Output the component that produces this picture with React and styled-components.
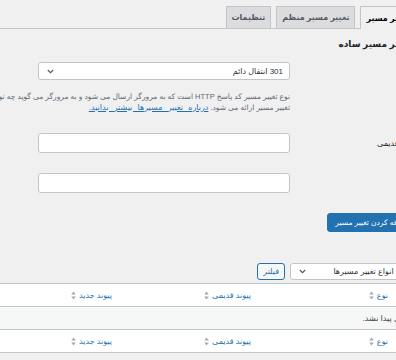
import React from "react";
import styled, { createGlobalStyle } from "styled-components";

const GlobalStyle = createGlobalStyle`
  html, body {
    margin: 0;
    padding: 0;
    overflow: hidden;
    background: #f0f0f1;
  }
  body {
    font-family: "Liberation Sans", "DejaVu Sans", sans-serif;
    color: #3c434a;
  }
`;

const Page = styled.div`
  direction: rtl;
  width: 480px;
  margin-left: -60px;
  height: 360px;
`;

const TabBar = styled.div`
  display: flex;
  gap: 5px;
  padding: 6px 5px 0 0;
  border-bottom: 1px solid #c3c4c7;
`;

const Tab = styled.div`
  box-sizing: border-box;
  padding: 0 5px;
  display: flex;
  align-items: center;
  font-size: 8px;
  font-weight: 600;
  border: 1px solid #c3c4c7;
  border-bottom: none;
  margin-bottom: ${(p) => (p.$active ? "-1px" : "0")};
  height: ${(p) => (p.$active ? "23px" : "22px")};
  background: ${(p) => (p.$active ? "#f0f0f1" : "#dcdcde")};
  color: ${(p) => (p.$active ? "#000" : "#50575e")};
`;

const Heading = styled.h2`
  margin: 8px 9px 0 0;
  font-size: 9px;
  line-height: 15px;
  font-weight: 600;
  color: #1d2327;
`;

const FormRow = styled.div`
  display: flex;
  padding: 10px 0;
`;

const Label = styled.div`
  width: 124px;
  box-sizing: border-box;
  padding-right: 4px;
  flex: none;
  font-size: 8px;
  color: #1d2327;
  display: flex;
  align-items: center;
  height: 20px;
`;

const Field = styled.div`
  flex: 1;
  padding-right: 6px;
`;

const Select = styled.div`
  width: ${(p) => p.$width || "252px"};
  height: ${(p) => p.$height || "18px"};
  box-sizing: border-box;
  background: #fff;
  border: 1px solid #c3c4c7;
  border-radius: 3px;
  display: flex;
  align-items: center;
  justify-content: space-between;
  padding: 0 6px 0 8px;
  font-size: 8px;
  color: #2c3338;
`;

const Input = styled.div`
  width: 252px;
  height: 20px;
  box-sizing: border-box;
  background: #fff;
  border: 1px solid #c3c4c7;
  border-radius: 3px;
`;

const Description = styled.p`
  margin: 12px 0 0;
  font-size: 7.5px;
  line-height: 10.5px;
  color: #646970;
  white-space: nowrap;
`;

const Link = styled.a`
  color: #2271b1;
  text-decoration: underline;
  font-size: 8px;
  word-spacing: 3px;
`;

const PrimaryButton = styled.div`
  display: inline-flex;
  align-items: center;
  height: 19px;
  box-sizing: border-box;
  margin: 10px 4px 0 0;
  padding: 0 7px;
  background: #2271b1;
  border: 1px solid #2271b1;
  border-radius: 3px;
  color: #fff;
  font-size: 7.5px;
`;

const Toolbar = styled.div`
  display: flex;
  gap: 5px;
  margin-top: 31px;
  padding-right: 4px;
`;

const SecondaryButton = styled.div`
  height: 17px;
  box-sizing: border-box;
  padding: 0 5px;
  display: flex;
  align-items: center;
  border: 1px solid #2271b1;
  border-radius: 3px;
  background: #f6f7f7;
  color: #2271b1;
  font-size: 8px;
`;

const Table = styled.div`
  margin-top: 3px;
  border-top: 1px solid #c3c4c7;
  border-bottom: 1px solid #c3c4c7;
  background: #fff;
`;

const Row = styled.div`
  display: grid;
  grid-template-columns: 28px 137px 139px 1fr;
  height: 22px;
  align-items: center;
  background: ${(p) => (p.$alt ? "#f6f7f7" : "#fff")};
  border-bottom: ${(p) => (p.$last ? "none" : "1px solid #c3c4c7")};
`;

const HeadCell = styled.div`
  padding-right: 4px;
  display: flex;
  align-items: center;
  gap: 3px;
  font-size: 8px;
  color: #2271b1;
`;

const EmptyCell = styled.div`
  grid-column: 1 / -1;
  padding-right: 4px;
  font-size: 8px;
  color: #3c434a;
`;

function Chevron() {
  return (
    <svg width="7" height="5" viewBox="0 0 7 5">
      <path d="M0.8 1 L3.5 3.7 L6.2 1" fill="none" stroke="#50575e" strokeWidth="1.1" />
    </svg>
  );
}

function SortArrows() {
  return (
    <svg width="5" height="9" viewBox="0 0 5 9">
      <path d="M2.5 0.5 L4.8 3.6 L0.2 3.6 Z" fill="#a7aaad" />
      <path d="M2.5 8.5 L4.8 5.4 L0.2 5.4 Z" fill="#a7aaad" />
    </svg>
  );
}

const columns = ["نوع", "پیوند قدیمی", "پیوند جدید"];

function HeaderRow({ last }) {
  return (
    <Row $last={last}>
      <div />
      {columns.map((c) => (
        <HeadCell key={c}>
          {c}
          <SortArrows />
        </HeadCell>
      ))}
    </Row>
  );
}

export default function App() {
  return (
    <>
      <GlobalStyle />
      <Page>
        <TabBar>
          <Tab $active>تغییر مسیر</Tab>
          <Tab>تغییر مسیر منظم</Tab>
          <Tab>تنظیمات</Tab>
        </TabBar>
        <Heading>تغییر مسیر ساده</Heading>
        <FormRow>
          <Label />
          <Field>
            <Select>
              <span>301 انتقال دائم</span>
              <Chevron />
            </Select>
            <Description>
              نوع تغییر مسیر کد پاسخ HTTP است که به مرورگر ارسال می شود و به مرورگر می گوید چه نوع
              <br />
              تغییر مسیر ارائه می شود. <Link>درباره تغییر مسیرها بیشتر بدانید.</Link>
            </Description>
          </Field>
        </FormRow>
        <FormRow>
          <Label>پیوند قدیمی</Label>
          <Field>
            <Input />
          </Field>
        </FormRow>
        <FormRow>
          <Label>مقصد</Label>
          <Field>
            <Input />
          </Field>
        </FormRow>
        <PrimaryButton>اضافه کردن تغییر مسیر</PrimaryButton>
        <Toolbar>
          <Select $width="126px" $height="17px">
            <span>همه انواع تغییر مسیرها</span>
            <Chevron />
          </Select>
          <SecondaryButton>فیلتر</SecondaryButton>
        </Toolbar>
        <Table>
          <HeaderRow />
          <Row $alt>
            <EmptyCell>موردی پیدا نشد.</EmptyCell>
          </Row>
          <HeaderRow last />
        </Table>
      </Page>
    </>
  );
}
